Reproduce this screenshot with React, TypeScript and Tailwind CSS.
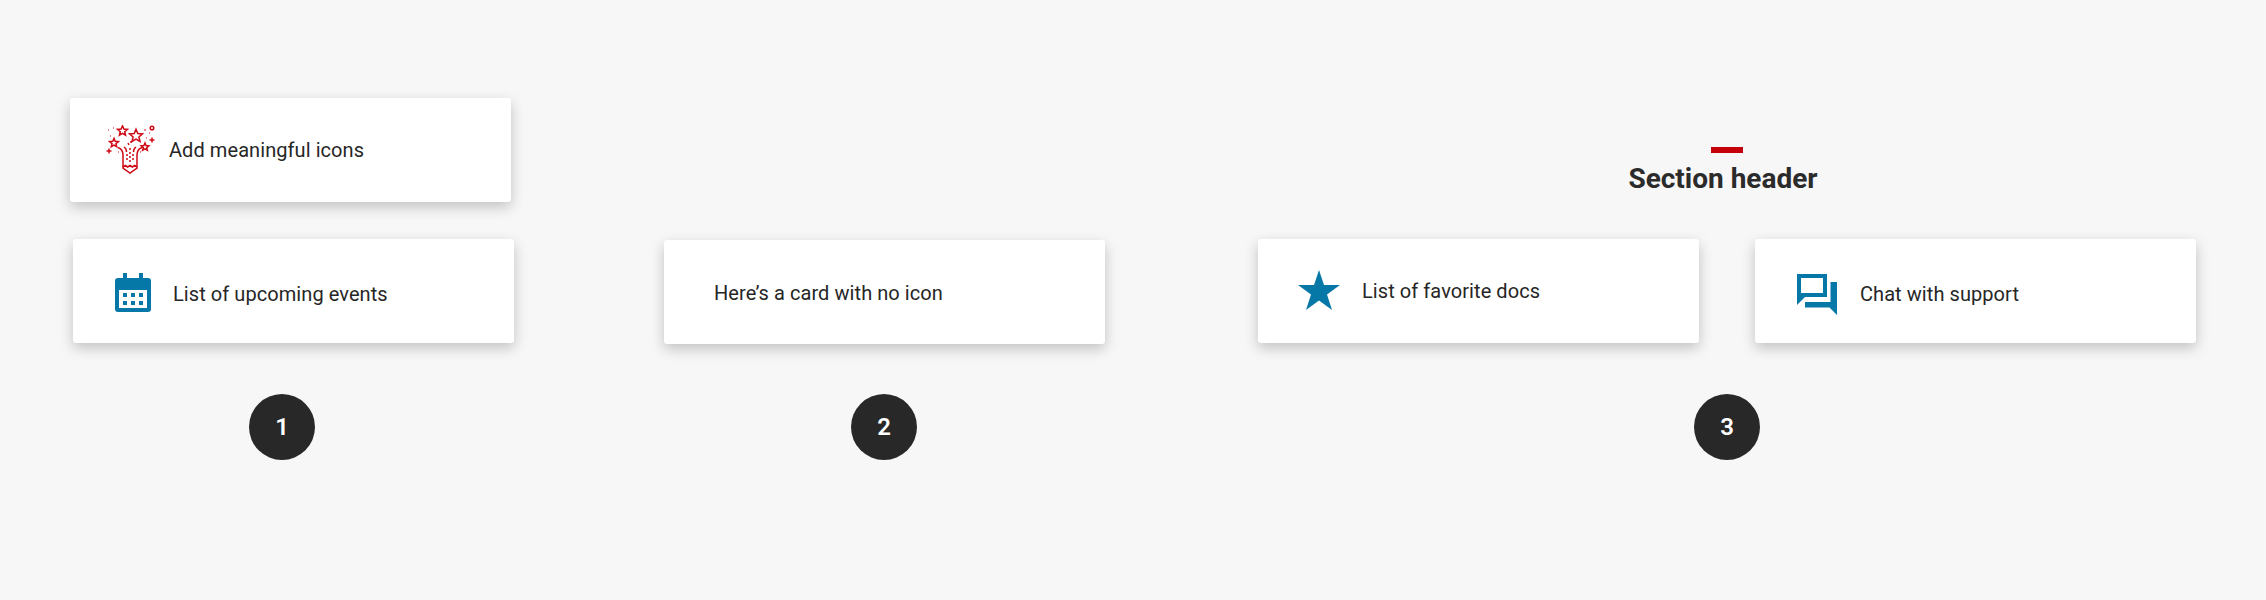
import React from 'react';

const cardClass =
  "flex h-[104px] w-[441px] items-center rounded-[3px] bg-white text-[20px] font-[450] leading-none tracking-[0.07px] text-[#262626] shadow-[0_5px_14px_rgba(0,0,0,0.22)]";

const StepBadge = ({ n }: { n: number }) => (
  <div className="flex h-[66px] w-[66px] items-center justify-center rounded-full bg-[#282828] text-[24px] font-semibold text-white">
    {n}
  </div>
);

const star = (cx: number, cy: number, r: number) => {
  const pts: string[] = [];
  for (let i = 0; i < 10; i++) {
    const rad = i % 2 === 0 ? r : r * 0.45;
    const a = -Math.PI / 2 + (i * Math.PI) / 5;
    pts.push(`${(cx + rad * Math.cos(a)).toFixed(2)},${(cy + rad * Math.sin(a)).toFixed(2)}`);
  }
  return pts.join(' ');
};

const FireworksIcon = () => (
  <svg width="50" height="50" viewBox="105 125 50 50" fill="none" stroke="#cf0a16" strokeWidth="1.5" className="shrink-0">
    <polygon points={star(122.5, 131, 5.2)} />
    <polygon points={star(136, 136, 6.8)} />
    <polygon points={star(114, 143, 4.6)} />
    <polygon points={star(145, 147, 4)} />
    <circle cx="152" cy="128" r="1.8" />
    <path d="M152 137.500v5M149.500 140h5M109 148.500v5M106.500 151h5" />
    <path d="M123 155v13l7 5 7-5v-13" />
    <path d="M123 167l2.300-1.500 2.400 1.500 2.300-1.500 2.300 1.500 2.400-1.500 2.300 1.500" />
    <path d="M123 155c0-3-1-6-5-7.500M137 155c0-3 1-6 5-7.500M126.500 152c0-3-1-4-2.500-5M133.500 152c0-3 1-4 2.500-5" />
    <path d="M130 148v14M127 154v8M133 154v8" strokeDasharray="2 2" />
    <path d="M128 143l1 2M131 141v2" />
    <path d="M108 130h1M113 128h1M110 136h1M144 130h2M149 133h1M146 138h1M118 152h1M140 152h1" strokeWidth="1.2" />
  </svg>
);

const CalendarIcon = () => (
  <svg width="36" height="39" viewBox="115 273 36 39" className="mt-[3px] shrink-0">
    <path fill="#0678a8" d="M123 273h4v5h12v-5h4v5h5a3 3 0 0 1 3 3v28a3 3 0 0 1-3 3h-30a3 3 0 0 1-3-3v-28a3 3 0 0 1 3-3h5z" />
    <rect x="119" y="290" width="28" height="18" fill="#fff" />
    <g fill="#0678a8">
      <rect x="123" y="293" width="4" height="4" />
      <rect x="131" y="293" width="4" height="4" />
      <rect x="139" y="293" width="4" height="4" />
      <rect x="123" y="301" width="4" height="4" />
      <rect x="131" y="301" width="4" height="4" />
      <rect x="139" y="301" width="4" height="4" />
    </g>
  </svg>
);

const StarIcon = () => (
  <svg width="42" height="40" viewBox="0 0 42 40" className="mb-[2px] shrink-0">
    <polygon fill="#0678a8" points="21,0 26,15 42,15 29,24.500 34,40 21,30.500 8,40 13,24.500 0,15 16,15" />
  </svg>
);

const ChatIcon = () => (
  <svg width="40" height="41" viewBox="0 0 40 41" className="mt-[7px] shrink-0">
    <path
      fill="#0678a8"
      fillRule="evenodd"
      d="M0 0h30v23H8l-8 8zM4 4v15h22V4z"
    />
    <path fill="#0678a8" d="M33.500 8H40v33l-7.500-7.500H8V28h25.500z" />
  </svg>
);

export default function App() {
  return (
    <div className="flex h-[600px] w-[2266px] items-start bg-[#f7f7f7] pl-[70px] font-['Roboto',sans-serif]">
      <div className="flex w-[444px] flex-col items-start pt-[98px]">
        <div className={`${cardClass} pl-[35px]`}>
          <FireworksIcon />
          <span className="ml-[14px]">Add meaningful icons</span>
        </div>
        <div className={`${cardClass} ml-[3px] mt-[37px] pl-[42px]`}>
          <CalendarIcon />
          <span className="ml-[22px] pt-[6px]">List of upcoming events</span>
        </div>
        <div className="ml-[179px] mt-[51px]">
          <StepBadge n={1} />
        </div>
      </div>

      <div className="ml-[150px] flex flex-col items-center pt-[240px]">
        <div className={`${cardClass} pl-[50px]`}>
          <span className="pt-[1px]">Here’s a card with no icon</span>
        </div>
        <div className="mr-[1px] mt-[50px]">
          <StepBadge n={2} />
        </div>
      </div>

      <div className="ml-[153px] flex flex-col pt-[147px]">
        <div className="flex flex-col items-center">
          <div className="h-[6px] w-[32px] bg-[#c4000a]" />
          <h2 className="mr-[8px] mt-[8px] h-[36px] text-[28px] font-bold leading-[36px] text-[#2b2b2b]">Section header</h2>
        </div>
        <div className="mt-[42px] flex gap-[56px]">
          <div className={`${cardClass} pl-[40px]`}>
            <StarIcon />
            <span className="ml-[22px]">List of favorite docs</span>
          </div>
          <div className={`${cardClass} pl-[42px]`}>
            <ChatIcon />
            <span className="ml-[23px] pt-[6px]">Chat with support</span>
          </div>
        </div>
        <div className="ml-[436px] mt-[51px]">
          <StepBadge n={3} />
        </div>
      </div>
    </div>
  );
}
